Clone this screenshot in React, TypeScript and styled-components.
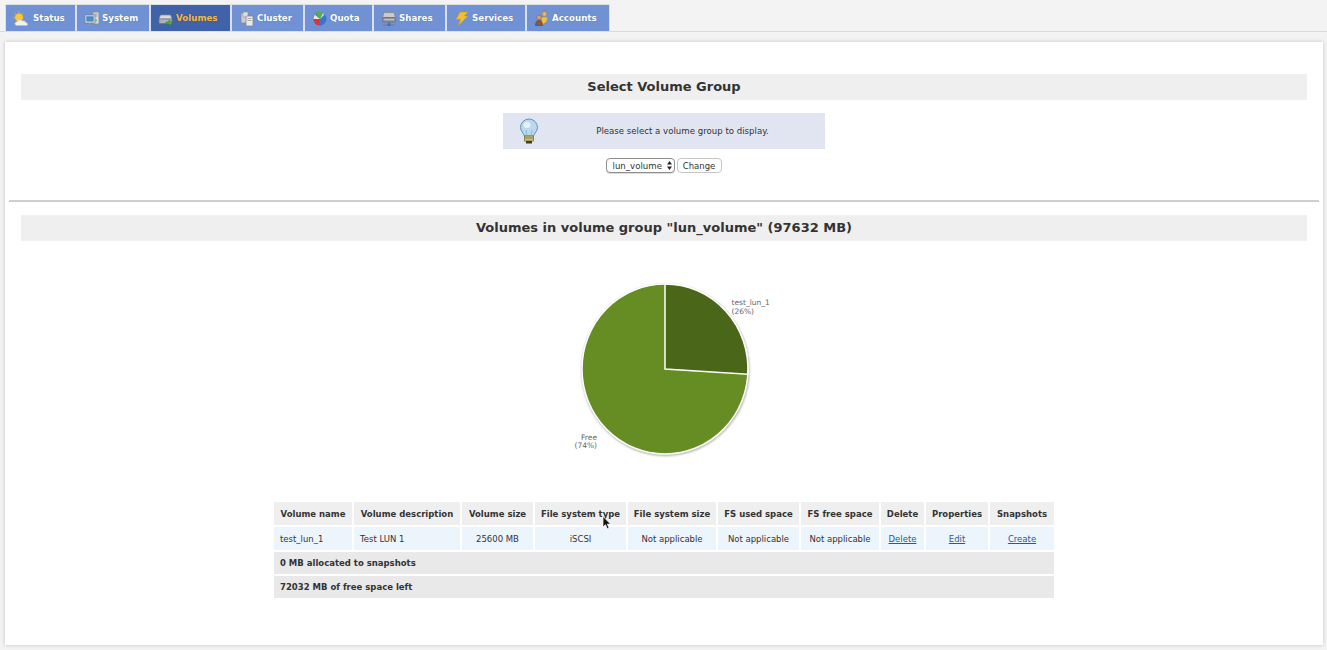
import React from "react";
import styled, { createGlobalStyle } from "styled-components";

const Global = createGlobalStyle`
  html, body { margin: 0; padding: 0; height: 100%; background: #f3f3f3; overflow: hidden; }
  body { font-family: "DejaVu Sans", Verdana, sans-serif; color: #333; font-size: 10px; }
`;

const Page = styled.div`
  width: 1327px;
  height: 650px;
  display: flex;
  flex-direction: column;
`;
const TabBar = styled.nav`
  display: flex;
  gap: 2px;
  height: 26px;
  padding: 5px 0 0 6px;
  border-bottom: 1px solid #d9d9d9;
  box-sizing: content-box;
  margin-bottom: 10px;
`;
const Tab = styled.a<{ $w: number; $active?: boolean }>`
  width: ${(p) => p.$w}px;
  height: 26px;
  box-sizing: border-box;
  display: flex;
  align-items: center;
  padding-left: 7px;
  gap: 2px;
  background: ${(p) => (p.$active ? "#3f62a8" : "#7092d4")};
  color: ${(p) => (p.$active ? "#f5b93a" : "#fff")};
  box-shadow: 0 0 0 1px #dcdfe6;
  font-weight: bold;
  font-size: 8.7px;
  text-shadow: 0 0 1px rgba(40, 60, 110, 0.5);
  svg { flex: none; margin-top: 1px; }
`;
const Panel = styled.main`
  margin: 0 4px 0 5px;
  height: 603px;
  box-sizing: border-box;
  background: #fff;
  box-shadow: 0 0 4px rgba(0, 0, 0, 0.2);
  padding: 32px 16px 0;
`;
const Heading = styled.h2`
  margin: 0;
  height: 26px;
  line-height: 26px;
  background: #efefef;
  text-align: center;
  font-size: 13px;
  font-weight: bold;
  color: #333;
`;
const InfoBox = styled.div`
  width: 322px;
  height: 36px;
  margin: 13px auto 0;
  background: #e0e5f1;
  display: flex;
  align-items: center;
`;
const InfoIcon = styled.div`
  width: 52px;
  display: flex;
  justify-content: center;
`;
const InfoText = styled.div`
  flex: 1;
  text-align: center;
  padding-right: 15px;
  font-size: 8.6px;
  color: #333;
`;
const FormRow = styled.form`
  display: flex;
  justify-content: center;
  gap: 2px;
  margin: 9px 1px 0 0;
  height: 15px;
`;
const SelectWrap = styled.div`
  position: relative;
  width: 69px;
  height: 15px;
`;
const Select = styled.select`
  appearance: none;
  width: 100%;
  height: 15px;
  box-sizing: border-box;
  border: 1px solid #8e8e8e;
  border-radius: 4px;
  background: #fff;
  padding: 0 0 0 6px;
  font: 8.6px "DejaVu Sans", sans-serif;
  color: #333;
  box-shadow: 0 1px 0 #ddd;
`;
const SelectArrows = styled.svg`
  position: absolute;
  right: 3px;
  top: 3px;
  pointer-events: none;
`;
const Button = styled.button`
  width: 45px;
  height: 15px;
  box-sizing: border-box;
  padding: 0;
  border: 1px solid #c6c6c6;
  border-radius: 4px;
  background: #fff;
  font: 8.5px "DejaVu Sans", sans-serif;
  color: #333;
`;
const Rule = styled.hr`
  margin: 27px -12px 13px;
  border: 0;
  height: 2px;
  background: #cfcfcf;
`;
const ChartWrap = styled.div`
  display: flex;
  justify-content: center;
  box-sizing: border-box;
  margin-top: 35px;
  padding-left: 33px;
  height: 224px;
`;
const ChartText = styled.text`
  font: 7.5px "DejaVu Sans", sans-serif;
  fill: #666;
`;
const Table = styled.table`
  border-collapse: separate;
  border-spacing: 2px;
  table-layout: fixed;
  width: 784px;
  margin: 0 auto;
  font-size: 8.5px;
`;
const Th = styled.th`
  height: 23px;
  padding: 0;
  background: #efefef;
  font-weight: bold;
  text-align: center;
  color: #333;
  white-space: nowrap;
  position: relative;
`;
const Td = styled.td<{ $left?: boolean }>`
  height: 23px;
  padding: ${(p) => (p.$left ? "0 0 0 6px" : "0")};
  background: #edf5fc;
  text-align: ${(p) => (p.$left ? "left" : "center")};
  white-space: nowrap;
  color: #333;
`;
const SummaryCell = styled.td`
  height: 22px;
  padding: 0 0 0 6px;
  background: #e9e9e9;
  font-weight: bold;
  color: #333;
`;
const Link = styled.a`
  color: #2a56a5;
  text-decoration: underline;
`;
const Pointer = styled.svg`
  position: absolute;
  left: 67px;
  top: 14px;
`;

const SunIcon = () => (
  <svg width="18" height="16" viewBox="0 0 18 16">
    <g stroke="#e3a826" strokeWidth="1"><path d="M6 0v2M1.500 2l1.600 1.400M10.500 2L9 3.400M0 6.500h2" /></g>
    <circle cx="6" cy="6.500" r="4.200" fill="#f6c93e" stroke="#d99a1f" strokeWidth=".7" />
    <path d="M4 14.500c-2.400 0-3-3.400 0-3.700.6-2.300 4-2.800 5.200-.7 1.400-.9 3.400 0 3.400 1.400 2.400 0 2.800 3 1 3z" fill="#f2f2ee" stroke="#b9bcc2" strokeWidth=".6" />
  </svg>
);
const SystemIcon = () => (
  <svg width="16" height="16" viewBox="0 0 16 16">
    <rect x="9" y="1" width="6" height="12" fill="#d7dade" stroke="#7f858d" strokeWidth=".7" />
    <path d="M10.500 3h3M10.500 5h3" stroke="#7f858d" strokeWidth=".7" />
    <circle cx="12" cy="9.500" r=".9" fill="#5fb25f" />
    <rect x="1" y="4" width="10" height="8" fill="#dfe3e8" stroke="#737a84" strokeWidth=".7" />
    <rect x="2.300" y="5.200" width="7.400" height="5.400" fill="#4d8cc4" />
    <path d="M5 12h2v2H5zM3 14h6v1H3z" fill="#8c929a" />
  </svg>
);
const VolumesIcon = () => (
  <svg width="16" height="16" viewBox="0 0 16 16">
    <path d="M2.500 4h10l1.500 4H1z" fill="#d9dadb" stroke="#83878c" strokeWidth=".7" />
    <rect x="1" y="8" width="13" height="4.500" rx=".8" fill="#aeb1b5" stroke="#6f7378" strokeWidth=".7" />
    <path d="M8 11h3V9l3.500 3-3.500 3v-2H8z" fill="#53a83f" stroke="#2f7a25" strokeWidth=".5" />
  </svg>
);
const ClusterIcon = () => (
  <svg width="16" height="16" viewBox="0 0 16 16">
    <rect x="2" y="2" width="7" height="10" rx="1" fill="#c9ccd0" stroke="#80858b" strokeWidth=".7" />
    <rect x="4" y="1" width="5" height="5" rx="1" fill="#dcdfe2" stroke="#8c9096" strokeWidth=".6" />
    <rect x="7" y="5" width="7" height="10" rx="1" fill="#e6e8ea" stroke="#7c8187" strokeWidth=".7" />
    <path d="M8.500 7.500h4M8.500 9.500h4" stroke="#8c9096" strokeWidth=".7" />
  </svg>
);
const QuotaIcon = () => (
  <svg width="16" height="16" viewBox="0 0 16 16">
    <circle cx="8" cy="8" r="6.500" fill="#3f73c9" />
    <path d="M8 8L3 1.800A6.500 6.500 0 0 1 11 2z" fill="#57ad47" />
    <path d="M8 8L1.500 8A6.500 6.500 0 0 0 7 14.500z" fill="#d9363a" />
    <path d="M8 8L1.500 8A6.500 6.500 0 0 1 3 3.800z" fill="#e6e6e6" />
    <path d="M8 8L11 2A6.500 6.500 0 0 1 12 4z" fill="#cfe3f7" />
  </svg>
);
const SharesIcon = () => (
  <svg width="16" height="16" viewBox="0 0 16 16">
    <path d="M3 1.500h10l1.500 5h-13z" fill="#c8cacd" stroke="#7f8388" strokeWidth=".7" />
    <rect x="1.500" y="6.500" width="13" height="4.500" rx=".8" fill="#909499" stroke="#666a70" strokeWidth=".7" />
    <path d="M3 8.700h10" stroke="#d5d7da" strokeWidth=".8" />
    <path d="M8 11v2.500" stroke="#666" strokeWidth="1" />
    <path d="M2 14h12" stroke="#6f7378" strokeWidth=".8" />
    <rect x="6.300" y="12.500" width="3.400" height="2.400" fill="#3d72c0" />
  </svg>
);
const ServicesIcon = () => (
  <svg width="16" height="16" viewBox="0 0 16 16">
    <path d="M6 1h8l-3.500 4H14L4 15l2.500-6.500H2z" fill="#f0bf3a" stroke="#c9921c" strokeWidth=".6" />
  </svg>
);
const AccountsIcon = () => (
  <svg width="16" height="16" viewBox="0 0 16 16">
    <circle cx="10.500" cy="3" r="2.300" fill="#e8b574" stroke="#a87238" strokeWidth=".5" />
    <path d="M7 6.500c2-1 5-1 7 .5l-2 4.500-4 2.500z" fill="#e9bf4d" stroke="#a87f28" strokeWidth=".5" />
    <circle cx="5" cy="6.500" r="2.300" fill="#d9a066" stroke="#8d5f30" strokeWidth=".5" />
    <path d="M1.500 14.500c0-3.500 1-5 3.500-5s3.500 1.500 3.500 5z" fill="#8a5a36" stroke="#5d3b20" strokeWidth=".5" />
    <path d="M2 13l2.500 2" stroke="#3d62b0" strokeWidth="1.600" />
  </svg>
);
const BulbIcon = () => (
  <svg width="20" height="27" viewBox="0 0 20 27">
    <path d="M10 1a8.500 8.500 0 0 0-8.500 8.500c0 3.500 3 5.500 4 8.500h9c1-3 4-5 4-8.500A8.500 8.500 0 0 0 10 1z" fill="#bcd8ee" stroke="#5f97ba" strokeWidth="1" />
    <ellipse cx="8" cy="7" rx="3.500" ry="3" fill="#e6f2fa" />
    <path d="M8 18l-1-6M12 18l1-6" stroke="#86a9c2" strokeWidth=".7" fill="none" />
    <rect x="5.500" y="18" width="9" height="5" fill="#c9c27a" stroke="#6d6a3a" strokeWidth=".7" />
    <path d="M5.500 20h9" stroke="#6d6a3a" strokeWidth=".7" />
    <rect x="7" y="23" width="6" height="2.500" fill="#3d3d2c" />
  </svg>
);

const tabs = [
  { label: "Status", w: 69, icon: <SunIcon /> },
  { label: "System", w: 72, icon: <SystemIcon /> },
  { label: "Volumes", w: 79, icon: <VolumesIcon />, active: true },
  { label: "Cluster", w: 71, icon: <ClusterIcon /> },
  { label: "Quota", w: 67, icon: <QuotaIcon /> },
  { label: "Shares", w: 71, icon: <SharesIcon /> },
  { label: "Services", w: 78, icon: <ServicesIcon /> },
  { label: "Accounts", w: 82, icon: <AccountsIcon /> },
];

const columns = [
  ["Volume name", 78],
  ["Volume description", 106],
  ["Volume size", 71],
  ["File system type", 91],
  ["File system size", 88],
  ["FS used space", 81],
  ["FS free space", 78],
  ["Delete", 43],
  ["Properties", 62],
  ["Snapshots", 64],
] as const;

const ColumnWidth = styled.col<{ $w: number }>`
  width: ${(p) => p.$w}px;
`;

function PieChart() {
  const cx = 94;
  const cy = 93;
  const rx = 83;
  const ry = 85;
  return (
    <svg width="220" height="190" viewBox="0 0 220 190">
      <defs>
        <filter id="pieShadow" x="-10%" y="-10%" width="120%" height="120%">
          <feGaussianBlur stdDeviation="1" />
        </filter>
      </defs>
      <ellipse cx={cx + 0.5} cy={cy + 1} rx={rx + 1} ry={ry + 1} fill="#b0b0b0" filter="url(#pieShadow)" />
      <ellipse cx={cx} cy={cy} rx={rx} ry={ry} fill="#668d23" stroke="#fff" strokeWidth="1.500" />
      <path d={`M${cx} ${cy}V${cy - ry}A${rx} ${ry} 0 0 1 ${cx + 82.8} ${cy + 5.3}Z`} fill="#4a6619" stroke="#fff" strokeWidth="1.500" />
      <ChartText x="160.5" y="29">test_lun_1</ChartText>
      <ChartText x="160.5" y="38">(26%)</ChartText>
      <ChartText x="26" y="164" textAnchor="end">Free</ChartText>
      <ChartText x="26" y="172" textAnchor="end">(74%)</ChartText>
    </svg>
  );
}

export default function App() {
  return (
    <Page>
      <Global />
      <TabBar>
        {tabs.map((t) => (
          <Tab key={t.label} $w={t.w} $active={t.active}>
            {t.icon}
            {t.label}
          </Tab>
        ))}
      </TabBar>
      <Panel>
        <Heading>Select Volume Group</Heading>
        <InfoBox>
          <InfoIcon><BulbIcon /></InfoIcon>
          <InfoText>Please select a volume group to display.</InfoText>
        </InfoBox>
        <FormRow>
          <SelectWrap>
            <Select defaultValue="lun_volume">
              <option>lun_volume</option>
            </Select>
            <SelectArrows width="5" height="9" viewBox="0 0 5 9">
              <path d="M2.500 0L5 3.500H0zM2.500 9L0 5.500h5z" fill="#222" />
            </SelectArrows>
          </SelectWrap>
          <Button type="button">Change</Button>
        </FormRow>
        <Rule />
        <Heading>Volumes in volume group "lun_volume" (97632 MB)</Heading>
        <ChartWrap>
          <PieChart />
        </ChartWrap>
        <Table>
          <colgroup>
            {columns.map(([name, w]) => <ColumnWidth key={name} $w={w} />)}
          </colgroup>
          <thead>
            <tr>
              {columns.map(([name]) => (
                <Th key={name}>
                  {name}
                  {name === "File system type" && (
                    <Pointer width="10" height="14" viewBox="0 0 10 14">
                      <path d="M1 .5v10.500l2.500-2.300 1.700 4 1.800-.8-1.700-3.800h3.300z" fill="#111" stroke="#fff" strokeWidth=".7" />
                    </Pointer>
                  )}
                </Th>
              ))}
            </tr>
          </thead>
          <tbody>
            <tr>
              <Td $left>test_lun_1</Td>
              <Td $left>Test LUN 1</Td>
              <Td>25600 MB</Td>
              <Td>iSCSI</Td>
              <Td>Not applicable</Td>
              <Td>Not applicable</Td>
              <Td>Not applicable</Td>
              <Td><Link href="#">Delete</Link></Td>
              <Td><Link href="#">Edit</Link></Td>
              <Td><Link href="#">Create</Link></Td>
            </tr>
            <tr><SummaryCell colSpan={10}>0 MB allocated to snapshots</SummaryCell></tr>
            <tr><SummaryCell colSpan={10}>72032 MB of free space left</SummaryCell></tr>
          </tbody>
        </Table>
      </Panel>
    </Page>
  );
}
